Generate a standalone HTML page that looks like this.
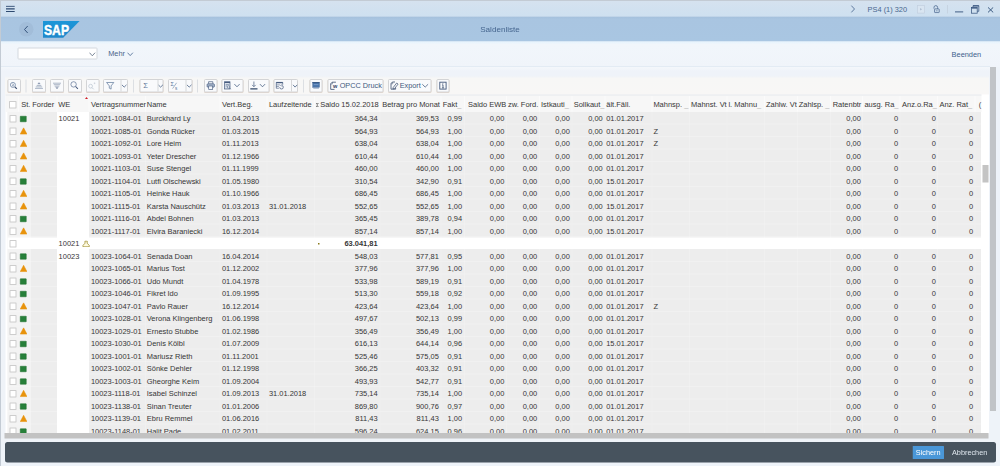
<!DOCTYPE html>
<html lang="de"><head><meta charset="utf-8"><title>Saldenliste</title>
<style>
*{box-sizing:border-box;margin:0;padding:0}
html,body{width:1000px;height:466px;overflow:hidden}
body{position:relative;background:#eef3f9;font-family:"Liberation Sans",Arial,sans-serif;font-size:7.47px;color:#363636;}
.abs{position:absolute}
#edgeL{left:0;top:0;width:1.2px;height:466px;background:#c3cbd4}
#sys{left:0;top:0;width:1000px;height:16.5px;background:linear-gradient(#d5e2ef,#cee0f0);border-top:1px solid #c3cbd4}
#hd{left:0;top:16.5px;width:1000px;height:25px;background:linear-gradient(#a4c0dc 0,#a9c5e1 3px,#a9c6e2 100%)}
#tb{left:1px;top:41.5px;width:999px;height:25.5px;background:linear-gradient(#e6f4fd 0,#f1f6fb 3px,#f0f4fa 100%)}
#tbline{left:1px;top:66px;width:989px;height:1px;background:#e3ebf4}
#content{left:1px;top:67px;width:989px;height:374.5px;background:linear-gradient(#f4f7fb 0,#eff3f9 4px,#eff3f8 100%)}
#alvtb{left:5px;top:76px;width:984px;height:19px;background:linear-gradient(#eff3f8 0,#f7f7f6 2.5px,#f8f7f6 100%)}
.ttl{left:0;width:1000px;top:24px;text-align:center;font-size:8.1px;color:#46668f;line-height:9px}
.bl{color:#3c5f8c}
.btn{position:absolute;top:79.2px;height:13.3px;border:1px solid #d3d4d6;border-radius:1.5px;background:#f9fafc;box-shadow:0 0.6px 0 rgba(214,190,170,.55)}
.btn svg{position:absolute;left:0;top:0}
.btn .dv{position:absolute;top:0;bottom:0;width:1px;background:#d6d7d9}
.sep{position:absolute;top:79.5px;height:13px;width:1px;background:#dcdfe3}
.btxt{position:absolute;top:0;line-height:11.6px;font-size:7.3px;color:#43597c;white-space:nowrap}
/* table */
#tbl{left:5.5px;top:94.5px;width:983.5px;height:339px;background:#fff;overflow:hidden}
#thead{position:absolute;left:0;top:0;width:975.5px;height:17.5px;background:#f7f7f7;border-top:1px solid #e9ecef}
.h{position:absolute;top:100.2px;line-height:9px;white-space:nowrap;color:#363636;font-size:7.47px}
.u{color:#b5b5b5}
.hvl{position:absolute;top:96px;height:15.5px;width:1px;background:rgba(255,255,255,.5)}
.row{position:absolute;left:6px;width:975px;height:12.5px;border-bottom:1px solid rgba(255,255,255,.22)}
.row.sub{border-bottom:none}
.subbg{position:absolute;left:1.5px;top:.7px;width:973.5px;height:11.5px;background:#fff}
.row .c{position:absolute;top:-0.1px;line-height:12.9px;white-space:nowrap;margin-left:-6px}
.row .c.r{margin-left:0;margin-right:-19px}
.cb{position:absolute;left:3.3px;top:3.2px;width:7.4px;height:7.4px;background:#fff;border:1px solid #cdcdcd;border-radius:.4px}
.sg{position:absolute;left:14.2px;top:4.2px;width:6.4px;height:6px;background:#27803a;border:0.7px solid #1f6e2d;border-radius:.5px}
.tri{position:absolute;left:13.9px;top:3.2px;width:7.2px;height:7.2px}
.lite{position:absolute;left:7.5px;top:112px;width:23.5px;height:321px;background:rgba(255,255,255,.35)}
.wecol{position:absolute;left:57px;top:112px;width:32px;height:321px;background:#fff}
.vl{position:absolute;top:112px;height:321px;width:1px;background:rgba(255,255,255,.2)}
.sumic{position:absolute;left:76px;top:3.4px;width:8.2px;height:6.8px}
.dot{position:absolute;left:312px;top:6.2px;width:1.4px;height:1.4px;background:#8a7a1a}
#vsb{left:982px;top:95px;width:7px;height:338px;background:#fff}
#vsbt{left:982.3px;top:165px;width:6.2px;height:17.5px;background:#c4c4c4}
#hsb{left:4.5px;top:433px;width:984px;height:5.7px;background:#c2c2c2}
#psb{left:989.8px;top:67px;width:6.2px;height:344px;background:#c1c4c7}
#foot{left:5px;top:442px;width:991px;height:20.5px;background:#47535e;border-radius:2.5px}
#save{left:912.3px;top:445.8px;width:31.7px;height:13.2px;background:#4a97d8;color:#fff;text-align:center;line-height:13px;font-size:7.3px;border-radius:.5px}
#canc{left:952px;top:445.8px;line-height:13px;font-size:7.3px;color:#dfe6ee}
#sc{position:absolute;left:0;top:0;width:2000px;height:932px;transform:scale(.5);transform-origin:0 0}
#zm{position:absolute;left:0;top:0;width:1000px;height:466px;zoom:2}
</style></head><body>
<div id="sc"><div id="zm">
<div id="sys" class="abs"></div>
<div id="hd" class="abs"></div>
<div id="tb" class="abs"></div>
<div id="content" class="abs"></div>
<div id="tbline" class="abs"></div>
<div id="alvtb" class="abs"></div>
<div id="edgeL" class="abs"></div>

<!-- system bar -->
<svg class="abs" style="left:6px;top:5.6px" width="9" height="7" viewBox="0 0 9 7"><path d="M0 .7h8.7M0 3.4h8.7M0 6.0h8.7" stroke="#2e4a70" stroke-width="1.1" fill="none"/></svg>
<svg class="abs" style="left:850.5px;top:5.2px" width="5" height="8" viewBox="0 0 5 8"><path d="M.8.6L4 4 .8 7.4" stroke="#4a6890" stroke-width=".85" fill="none"/></svg>
<div class="abs bl" style="left:867.6px;top:4.4px;line-height:9px;font-size:7.4px;color:#48668e">PS4 (1) 320</div>
<svg class="abs" style="left:917px;top:4.8px" width="8" height="9" viewBox="0 0 8 9"><rect x=".5" y=".5" width="7" height="7.6" fill="#d9e5f1" stroke="#c2cfde" stroke-width=".7"/><path d="M3.2 3.1L5 4.3 3.2 5.5z" fill="#a9b9cd"/></svg>
<svg class="abs" style="left:932.6px;top:4.4px" width="8" height="9" viewBox="0 0 8 9"><path d="M1.5 4.2V2.9a1.8 1.8 0 0 1 3.6 0V4.4" stroke="#48648c" stroke-width=".75" fill="none"/><rect x="2.1" y="4.4" width="4.6" height="3.7" rx=".5" fill="none" stroke="#48648c" stroke-width=".75"/><path d="M4.4 5.6v1.3" stroke="#48648c" stroke-width=".7"/></svg>
<div class="abs" style="left:947.2px;top:5px;width:1px;height:8.5px;background:#c6d3e1"></div>
<svg class="abs" style="left:955px;top:11px" width="9" height="2" viewBox="0 0 9 2"><path d="M0 .9h8.2" stroke="#3a5780" stroke-width=".95"/></svg>
<svg class="abs" style="left:970.8px;top:4.8px" width="9" height="9" viewBox="0 0 9 9"><path d="M2 2.2V.7h5.8v5.6H6.2" stroke="#3a5780" stroke-width=".75" fill="none"/><path d="M2 .9h5.8" stroke="#3a5780" stroke-width="1.1"/><rect x=".5" y="2.6" width="5.7" height="5.6" fill="none" stroke="#3a5780" stroke-width=".75"/><path d="M.5 3h5.7" stroke="#3a5780" stroke-width="1.2"/></svg>
<svg class="abs" style="left:987.6px;top:6.8px" width="7" height="6" viewBox="0 0 7 6"><path d="M.5.4l5.2 5M5.7.4L.5 5.4" stroke="#35547c" stroke-width=".95" fill="none"/></svg>

<!-- header -->
<div class="abs" style="left:19px;top:22px;width:14.6px;height:14.6px;border-radius:50%;background:#a2bdd9"></div>
<svg class="abs" style="left:23.6px;top:25.4px" width="5" height="8" viewBox="0 0 5 8"><path d="M4.2.5L1 4l3.2 3.5" stroke="#2f4f78" stroke-width=".95" fill="none"/></svg>
<svg class="abs" style="left:43px;top:21px" width="37" height="17" viewBox="0 0 37 17"><defs><linearGradient id="sg" x1="0" y1="0" x2="0" y2="1"><stop offset="0" stop-color="#1b96d8"/><stop offset="1" stop-color="#2088cb"/></linearGradient></defs><path d="M0 0H36.6L20.2 16.7H0z" fill="url(#sg)"/><text x="1" y="13.9" font-family="Liberation Sans, Arial, sans-serif" font-weight="bold" font-size="15" fill="#fff" stroke="#fff" stroke-width=".45" textLength="25" lengthAdjust="spacingAndGlyphs">SAP</text></svg>
<div class="abs ttl">Saldenliste</div>

<!-- command row -->
<div class="abs" style="left:17.3px;top:47.4px;width:80.3px;height:12.3px;background:#fff;border:1px solid #d3d8de;border-radius:1.2px"></div>
<svg class="abs" style="left:89.2px;top:52.1px" width="7" height="5" viewBox="0 0 7 5"><path d="M.5.7L3.3 3.8 6.1.7" stroke="#5a6b80" stroke-width=".8" fill="none"/></svg>
<div class="abs bl" style="left:108.2px;top:49.2px;line-height:9px;font-size:7.4px;color:#4a6488">Mehr</div>
<svg class="abs" style="left:127.2px;top:51.9px" width="7" height="5" viewBox="0 0 7 5"><path d="M.5.7L3.2 3.6 5.9.7" stroke="#44648f" stroke-width=".8" fill="none"/></svg>
<div class="abs bl" style="left:951.6px;top:50px;line-height:9px;font-size:7.4px;color:#3c5f8c">Beenden</div>

<!-- ALV toolbar -->
<div class="btn" style="left:7.5px;width:13.50px"><svg style="left:-1px;top:-1px" width="13.50" height="13.3" viewBox="0 0 13.50 13.3" fill="none" stroke="#5b7599" stroke-width="0.70"><circle cx="5.4" cy="5.9" r="2.5" stroke-width=".7"/><path d="M7.4 7.8L9.3 9.8" stroke="#3d4f6e" stroke-width="1.2"/><path d="M4.5 5.3q1-.8 1.6 0t-1.5 1.5h1.9" stroke-width="0.45"/></svg></div>
<i class="sep" style="left:25.7px"></i>
<div class="btn" style="left:32px;width:14.00px"><svg style="left:-1px;top:-1px" width="14.00" height="13.3" viewBox="0 0 14.00 13.3" fill="none" stroke="#5b7599" stroke-width="0.70"><g stroke="#7d8da7"><path d="M7 3.5L8.2 5H5.8z" fill="#7d8da7" stroke-width="0.3"/><path d="M4.7 6.4h4.6M3.8 7.9h6.4M3 9.4h8" stroke-width="0.62"/></g></svg></div>
<div class="btn" style="left:50px;width:14.00px"><svg style="left:-1px;top:-1px" width="14.00" height="13.3" viewBox="0 0 14.00 13.3" fill="none" stroke="#5b7599" stroke-width="0.70"><g stroke="#7d8da7"><path d="M3 4.2h8M3.8 5.7h6.4M4.7 7.2h4.6" stroke-width="0.62"/><path d="M7 9.9L8.3 8.4H5.7z" fill="#7d8da7" stroke-width="0.3"/></g></svg></div>
<div class="btn" style="left:68px;width:14.00px"><svg style="left:-1px;top:-1px" width="14.00" height="13.3" viewBox="0 0 14.00 13.3" fill="none" stroke="#5b7599" stroke-width="0.70"><circle cx="5.6" cy="5.4" r="2.7" stroke="#5a7092" stroke-width=".7"/><path d="M7.6 7.5L9.9 9.9" stroke="#43567a" stroke-width="1.05"/></svg></div>
<div class="btn dis" style="left:86px;width:13.50px"><svg style="left:-1px;top:-1px" width="13.50" height="13.3" viewBox="0 0 13.50 13.3" fill="none" stroke="#5b7599" stroke-width="0.70"><g stroke="#b7c1ce"><circle cx="4.6" cy="7.2" r="1.9" stroke-width="0.65"/><path d="M6 8.6L7.7 10.3" stroke-width="0.8"/><path d="M7.7 4.3h1.7M8.55 3.45v1.7" stroke-width="0.45"/></g></svg></div>
<div class="btn" style="left:103px;width:24.75px"><svg style="left:-1px;top:-1px" width="24.75" height="13.3" viewBox="0 0 24.75 13.3" fill="none" stroke="#5b7599" stroke-width="0.70"><path d="M3.6 3.5h7.2L8.1 6.9v3.2L6.3 9.2V6.9z" stroke-linejoin="round"/><path d="M18.90 5.85L21.20 8.10L23.50 5.85" stroke="#40587e" stroke-width="0.76"/></svg><i class="dv" style="left:16.60px"></i></div>
<i class="sep" style="left:133.0px"></i>
<div class="btn" style="left:139.4px;width:24.10px"><svg style="left:-1px;top:-1px" width="24.10" height="13.3" viewBox="0 0 24.10 13.3" fill="none" stroke="#5b7599" stroke-width="0.70"><text x="3.8" y="9.2" font-family="Liberation Sans, Arial, sans-serif" font-size="7.6" fill="#5b7599" stroke="none">Σ</text><path d="M18.80 5.85L21.10 8.10L23.40 5.85" stroke="#40587e" stroke-width="0.76"/></svg><i class="dv" style="left:17.10px"></i></div>
<div class="btn" style="left:168px;width:24.25px"><svg style="left:-1px;top:-1px" width="24.25" height="13.3" viewBox="0 0 24.25 13.3" fill="none" stroke="#5b7599" stroke-width="0.70"><text x="2.6" y="7" font-family="Liberation Sans, Arial, sans-serif" font-size="5.4" fill="#5b7599" stroke="none">Σ</text><path d="M4.6 9.6L8.6 3.8" stroke-width="0.55"/><text x="7.1" y="10.6" font-family="Liberation Sans, Arial, sans-serif" font-size="4.6" fill="#5b7599" stroke="none">s</text><path d="M18.90 5.85L21.20 8.10L23.50 5.85" stroke="#40587e" stroke-width="0.76"/></svg><i class="dv" style="left:16.60px"></i></div>
<i class="sep" style="left:197.0px"></i>
<div class="btn" style="left:204px;width:13.25px"><svg style="left:-1px;top:-1px" width="13.25" height="13.3" viewBox="0 0 13.25 13.3" fill="none" stroke="#5b7599" stroke-width="0.70"><path d="M4.6 4.8V2.7h4.2V4.8" stroke="#485d80" stroke-width="0.7"/><rect x="3.1" y="4.8" width="7.3" height="3.4" rx=".9" fill="#a9b8cd" stroke="#485d80" stroke-width="0.7"/><rect x="4.7" y="7" width="4" height="3.4" fill="#f4f7fb" stroke="#485d80" stroke-width="0.65"/></svg></div>
<div class="btn" style="left:221.5px;width:22.00px"><svg style="left:-1px;top:-1px" width="22.00" height="13.3" viewBox="0 0 22.00 13.3" fill="none" stroke="#5b7599" stroke-width="0.70"><rect x="3.1" y="2.8" width="5.4" height="7.2" fill="#d7dfea" stroke="#485d80" stroke-width="0.7"/><path d="M3.1 3.4h5.4" stroke="#485d80" stroke-width="1.1"/><path d="M4.2 5.6h3.2M4.2 7h1.6" stroke="#485d80" stroke-width="0.5"/><circle cx="7" cy="8" r="1.2" fill="#f4f7fb" stroke="#485d80" stroke-width=".55"/><path d="M7.9 8.9l1.3 1.3" stroke="#485d80" stroke-width="0.7"/><path d="M12.90 5.10L15.50 7.80L18.10 5.10" stroke="#40587e" stroke-width="0.76"/></svg></div>
<div class="btn" style="left:248px;width:21.40px"><svg style="left:-1px;top:-1px" width="21.40" height="13.3" viewBox="0 0 21.40 13.3" fill="none" stroke="#5b7599" stroke-width="0.70"><path d="M5.9 2.5v5M4.1 5.9l1.8 1.8 1.8-1.8" stroke="#485d80" stroke-width="0.7"/><path d="M2.3 9.9h7.2" stroke="#334868" stroke-width="1.1"/><path d="M11.90 5.10L14.50 7.80L17.10 5.10" stroke="#40587e" stroke-width="0.76"/></svg></div>
<div class="btn" style="left:273.4px;width:24.50px"><svg style="left:-1px;top:-1px" width="24.50" height="13.3" viewBox="0 0 24.50 13.3" fill="none" stroke="#5b7599" stroke-width="0.70"><path d="M2.8 9.3V3.4h6.4v2.4" stroke="#485d80" stroke-width="0.7"/><path d="M2.8 3.7h6.4" stroke="#485d80" stroke-width="1.2"/><path d="M2.8 5.9h3.6M2.8 7.6h2.6M2.8 9.3h2.6" stroke="#485d80" stroke-width="0.6"/><path d="M6.2 8.2a1.8 1.8 0 1 0 1.8-1.8" stroke="#485d80" stroke-width="0.75"/><path d="M8 5.4l-1 1 1 1" stroke="#485d80" stroke-width="0.55"/><path d="M19.50 5.85L21.60 8.10L23.70 5.85" stroke="#40587e" stroke-width="0.76"/></svg><i class="dv" style="left:16.85px"></i></div>
<i class="sep" style="left:303.0px"></i>
<div class="btn" style="left:309.6px;width:13.15px"><svg style="left:-1px;top:-1px" width="13.15" height="13.3" viewBox="0 0 13.15 13.3" fill="none" stroke="#5b7599" stroke-width="0.70"><rect x="3.2" y="3.2" width="6.8" height="5.2" fill="#4a74aa" stroke="#3d5f90" stroke-width="0.4"/><path d="M3.2 3.6h6.8" stroke="#34527e" stroke-width="0.9"/><path d="M4.2 5.6h4.8" stroke="#8fb0d8" stroke-width="0.6"/><path d="M3.8 9.3h5.6" stroke="#7f98ba" stroke-width="0.7"/></svg></div>
<div class="btn" style="left:327.25px;width:56.25px"><svg style="left:-1px;top:-1px" width="14" height="13.3" viewBox="0 0 14 13.3" fill="none" stroke="#5b7599" stroke-width="0.62"><path d="M8.4 3.2H4.6L3.2 4.8V10.4H7" stroke="#3b4f70" stroke-width=".8"/><path d="M4.9 3.2v1.8H3.2" stroke="#3b4f70" stroke-width="0.5"/><text x="5.5" y="9.2" font-family="Liberation Sans, Arial, sans-serif" font-weight="bold" font-size="5.6" fill="#34486a" stroke="none">w</text></svg><span class="btxt" style="left:11.4px">OPCC Druck</span></div>
<div class="btn" style="left:388px;width:43.5px"><svg style="left:-1px;top:-1px" width="43.5" height="13.3" viewBox="0 0 43.5 13.3" fill="none" stroke="#3b4f70" stroke-width="0.8"><path d="M7 3H4.4L3 4.6V10.2H7.6V8.6"/><path d="M4.7 3v1.8H3" stroke-width="0.5"/><path d="M5.2 8.5L8.7 4l1.4 1.1L6.6 9.5l-1.7.5z" stroke-width="0.7"/><path d="M34.30 5.25L37.20 8.10L40.10 5.25" stroke="#40587e" stroke-width="0.76"/></svg><span class="btxt" style="left:10.7px">Export</span></div>
<div class="btn" style="left:436.5px;width:12.90px"><svg style="left:-1px;top:-1px" width="12.90" height="13.3" viewBox="0 0 12.90 13.3" fill="none" stroke="#5b7599" stroke-width="0.70"><rect x="3.3" y="3.2" width="6.3" height="6.9" stroke="#43577a" stroke-width="0.9"/><path d="M6.5 5.9v2.8M5.5 8.9h2.1M5.7 5.9h.8" stroke="#3b4f70" stroke-width="0.8"/><circle cx="6.4" cy="4.7" r=".5" fill="#3b4f70" stroke="none"/></svg></div>

<!-- table -->
<div id="tbl" class="abs"></div>
<div class="abs" style="left:5.5px;top:94.5px;width:976px;height:17.5px;background:#f7f7f7;border-top:1px solid #e6e9ed"></div>
<i class="cb" style="left:9.2px;top:101.2px"></i>
<i class="hvl" style="left:18.0px"></i><i class="hvl" style="left:30.5px"></i><i class="hvl" style="left:56.5px"></i><i class="hvl" style="left:88.5px"></i><i class="hvl" style="left:145.0px"></i><i class="hvl" style="left:219.5px"></i><i class="hvl" style="left:266.5px"></i><i class="hvl" style="left:313.9px"></i><i class="hvl" style="left:379.5px"></i><i class="hvl" style="left:440.5px"></i><i class="hvl" style="left:463.9px"></i><i class="hvl" style="left:505.75px"></i><i class="hvl" style="left:538.9px"></i><i class="hvl" style="left:571.5px"></i><i class="hvl" style="left:604.5px"></i><i class="hvl" style="left:651.5px"></i><i class="hvl" style="left:688.9px"></i><i class="hvl" style="left:726.5px"></i><i class="hvl" style="left:763.9px"></i><i class="hvl" style="left:796.75px"></i><i class="hvl" style="left:830.1px"></i><i class="hvl" style="left:862.0px"></i><i class="hvl" style="left:899.5px"></i><i class="hvl" style="left:937.0px"></i><i class="hvl" style="left:974.5px"></i>
<span class="h" style="left:21.2px">St.</span><span class="h" style="left:32.2px">Forder</span><span class="h" style="left:58.3px">WE</span><span class="h" style="left:90.9px">Vertragsnummer</span><span class="h" style="left:146.8px">Name</span><span class="h" style="left:221.9px">Vert.Beg.</span><span class="h" style="left:268.9px">Laufzeitende</span><span class="h" style="left:320.2px">Saldo 15.02.2018</span><span class="h" style="left:382.2px">Betrag pro Monat</span><span class="h" style="left:442.7px">Fakt<span class="u">_</span></span><span class="h" style="left:468px">Saldo EWB</span><span class="h" style="left:508px">zw. Ford.</span><span class="h" style="left:541px">Istkauti<span class="u">_</span></span><span class="h" style="left:573.7px">Sollkaut<span class="u">_</span></span><span class="h" style="left:606.3px">ält.Fäll.</span><span class="h" style="left:653.4px">Mahnsp. <span class="u">_</span></span><span class="h" style="left:691px">Mahnst. Vt</span><span class="h" style="left:728.4px">l. Mahnu<span class="u">_</span></span><span class="h" style="left:766px">Zahlw. Vt</span><span class="h" style="left:798.7px">Zahlsp. <span class="u">_</span></span><span class="h" style="left:832.7px">Ratenbtr</span><span class="h" style="left:864.4px">ausg. Ra<span class="u">_</span></span><span class="h" style="left:902px">Anz.o.Ra<span class="u">_</span></span><span class="h" style="left:939.4px">Anz. Rat<span class="u">_</span></span><span class="h" style="left:978.8px">(</span>
<svg class="abs" style="left:85.2px;top:97.2px" width="3" height="2" viewBox="0 0 3 2"><path d="M1.5 0L3 2H0z" fill="#d0202a"/></svg>
<svg class="abs" style="left:315.8px;top:103.2px" width="3" height="4" viewBox="0 0 3 4"><path d="M2.7.3H.4L1.6 2 .4 3.7H2.7" stroke="#333" stroke-width=".6" fill="none"/></svg>
<div class="abs" style="left:7.5px;top:112px;width:973.5px;height:321px;background:#ededed"></div>
<i class="lite"></i>
<i class="wecol"></i>
<i class="vl" style="left:88.5px"></i><i class="vl" style="left:145.0px"></i><i class="vl" style="left:219.5px"></i><i class="vl" style="left:266.5px"></i><i class="vl" style="left:313.9px"></i><i class="vl" style="left:379.5px"></i><i class="vl" style="left:440.5px"></i><i class="vl" style="left:463.9px"></i><i class="vl" style="left:505.75px"></i><i class="vl" style="left:538.9px"></i><i class="vl" style="left:571.5px"></i><i class="vl" style="left:604.5px"></i><i class="vl" style="left:651.5px"></i><i class="vl" style="left:688.9px"></i><i class="vl" style="left:726.5px"></i><i class="vl" style="left:763.9px"></i><i class="vl" style="left:796.75px"></i><i class="vl" style="left:830.1px"></i><i class="vl" style="left:862.0px"></i><i class="vl" style="left:899.5px"></i><i class="vl" style="left:937.0px"></i><i class="vl" style="left:974.5px"></i>
<div class="row" style="top:112.0px"><i class="cb"></i><i class="sg"></i><span class="c" style="left:58.6px">10021</span><span class="c" style="left:90.9px">10021-1084-01</span><span class="c" style="left:146.8px">Burckhard Ly</span><span class="c" style="left:221.9px">01.04.2013</span><span class="c r" style="right:622.4px">364,34</span><span class="c r" style="right:561.2px">369,53</span><span class="c r" style="right:537.9px">0,99</span><span class="c r" style="right:495.7px">0,00</span><span class="c r" style="right:462.8px">0,00</span><span class="c r" style="right:430.1px">0,00</span><span class="c r" style="right:397.3px">0,00</span><span class="c" style="left:606.2px">01.01.2017</span><span class="c r" style="right:139.2px">0,00</span><span class="c r" style="right:101.8px">0</span><span class="c r" style="right:64.2px">0</span><span class="c r" style="right:26.8px">0</span></div>
<div class="row" style="top:124.5px"><i class="cb"></i><svg class="tri" viewBox="0 0 8 8"><path d="M4 0.3L7.7 7.3H0.3z" fill="#e8930c" stroke="#e8930c" stroke-width="0.6" stroke-linejoin="round"/></svg><span class="c" style="left:90.9px">10021-1085-01</span><span class="c" style="left:146.8px">Gonda Rücker</span><span class="c" style="left:221.9px">01.03.2015</span><span class="c r" style="right:622.4px">564,93</span><span class="c r" style="right:561.2px">564,93</span><span class="c r" style="right:537.9px">1,00</span><span class="c r" style="right:495.7px">0,00</span><span class="c r" style="right:462.8px">0,00</span><span class="c r" style="right:430.1px">0,00</span><span class="c r" style="right:397.3px">0,00</span><span class="c" style="left:606.2px">01.01.2017</span><span class="c" style="left:653.4px">Z</span><span class="c r" style="right:139.2px">0,00</span><span class="c r" style="right:101.8px">0</span><span class="c r" style="right:64.2px">0</span><span class="c r" style="right:26.8px">0</span></div>
<div class="row" style="top:137.0px"><i class="cb"></i><svg class="tri" viewBox="0 0 8 8"><path d="M4 0.3L7.7 7.3H0.3z" fill="#e8930c" stroke="#e8930c" stroke-width="0.6" stroke-linejoin="round"/></svg><span class="c" style="left:90.9px">10021-1092-01</span><span class="c" style="left:146.8px">Lore Heim</span><span class="c" style="left:221.9px">01.11.2013</span><span class="c r" style="right:622.4px">638,04</span><span class="c r" style="right:561.2px">638,04</span><span class="c r" style="right:537.9px">1,00</span><span class="c r" style="right:495.7px">0,00</span><span class="c r" style="right:462.8px">0,00</span><span class="c r" style="right:430.1px">0,00</span><span class="c r" style="right:397.3px">0,00</span><span class="c" style="left:606.2px">01.01.2017</span><span class="c" style="left:653.4px">Z</span><span class="c r" style="right:139.2px">0,00</span><span class="c r" style="right:101.8px">0</span><span class="c r" style="right:64.2px">0</span><span class="c r" style="right:26.8px">0</span></div>
<div class="row" style="top:149.5px"><i class="cb"></i><svg class="tri" viewBox="0 0 8 8"><path d="M4 0.3L7.7 7.3H0.3z" fill="#e8930c" stroke="#e8930c" stroke-width="0.6" stroke-linejoin="round"/></svg><span class="c" style="left:90.9px">10021-1093-01</span><span class="c" style="left:146.8px">Yeter Drescher</span><span class="c" style="left:221.9px">01.12.1966</span><span class="c r" style="right:622.4px">610,44</span><span class="c r" style="right:561.2px">610,44</span><span class="c r" style="right:537.9px">1,00</span><span class="c r" style="right:495.7px">0,00</span><span class="c r" style="right:462.8px">0,00</span><span class="c r" style="right:430.1px">0,00</span><span class="c r" style="right:397.3px">0,00</span><span class="c" style="left:606.2px">01.01.2017</span><span class="c r" style="right:139.2px">0,00</span><span class="c r" style="right:101.8px">0</span><span class="c r" style="right:64.2px">0</span><span class="c r" style="right:26.8px">0</span></div>
<div class="row" style="top:162.0px"><i class="cb"></i><svg class="tri" viewBox="0 0 8 8"><path d="M4 0.3L7.7 7.3H0.3z" fill="#e8930c" stroke="#e8930c" stroke-width="0.6" stroke-linejoin="round"/></svg><span class="c" style="left:90.9px">10021-1103-01</span><span class="c" style="left:146.8px">Suse Stengel</span><span class="c" style="left:221.9px">01.11.1999</span><span class="c r" style="right:622.4px">460,00</span><span class="c r" style="right:561.2px">460,00</span><span class="c r" style="right:537.9px">1,00</span><span class="c r" style="right:495.7px">0,00</span><span class="c r" style="right:462.8px">0,00</span><span class="c r" style="right:430.1px">0,00</span><span class="c r" style="right:397.3px">0,00</span><span class="c" style="left:606.2px">01.01.2017</span><span class="c r" style="right:139.2px">0,00</span><span class="c r" style="right:101.8px">0</span><span class="c r" style="right:64.2px">0</span><span class="c r" style="right:26.8px">0</span></div>
<div class="row" style="top:174.5px"><i class="cb"></i><i class="sg"></i><span class="c" style="left:90.9px">10021-1104-01</span><span class="c" style="left:146.8px">Lutfi Olschewski</span><span class="c" style="left:221.9px">01.05.1980</span><span class="c r" style="right:622.4px">310,54</span><span class="c r" style="right:561.2px">342,90</span><span class="c r" style="right:537.9px">0,91</span><span class="c r" style="right:495.7px">0,00</span><span class="c r" style="right:462.8px">0,00</span><span class="c r" style="right:430.1px">0,00</span><span class="c r" style="right:397.3px">0,00</span><span class="c" style="left:606.2px">15.01.2017</span><span class="c r" style="right:139.2px">0,00</span><span class="c r" style="right:101.8px">0</span><span class="c r" style="right:64.2px">0</span><span class="c r" style="right:26.8px">0</span></div>
<div class="row" style="top:187.0px"><i class="cb"></i><svg class="tri" viewBox="0 0 8 8"><path d="M4 0.3L7.7 7.3H0.3z" fill="#e8930c" stroke="#e8930c" stroke-width="0.6" stroke-linejoin="round"/></svg><span class="c" style="left:90.9px">10021-1105-01</span><span class="c" style="left:146.8px">Heinke Hauk</span><span class="c" style="left:221.9px">01.10.1966</span><span class="c r" style="right:622.4px">686,45</span><span class="c r" style="right:561.2px">686,45</span><span class="c r" style="right:537.9px">1,00</span><span class="c r" style="right:495.7px">0,00</span><span class="c r" style="right:462.8px">0,00</span><span class="c r" style="right:430.1px">0,00</span><span class="c r" style="right:397.3px">0,00</span><span class="c" style="left:606.2px">01.01.2017</span><span class="c r" style="right:139.2px">0,00</span><span class="c r" style="right:101.8px">0</span><span class="c r" style="right:64.2px">0</span><span class="c r" style="right:26.8px">0</span></div>
<div class="row" style="top:199.5px"><i class="cb"></i><svg class="tri" viewBox="0 0 8 8"><path d="M4 0.3L7.7 7.3H0.3z" fill="#e8930c" stroke="#e8930c" stroke-width="0.6" stroke-linejoin="round"/></svg><span class="c" style="left:90.9px">10021-1115-01</span><span class="c" style="left:146.8px">Karsta Nauschütz</span><span class="c" style="left:221.9px">01.03.2013</span><span class="c" style="left:268.9px">31.01.2018</span><span class="c r" style="right:622.4px">552,65</span><span class="c r" style="right:561.2px">552,65</span><span class="c r" style="right:537.9px">1,00</span><span class="c r" style="right:495.7px">0,00</span><span class="c r" style="right:462.8px">0,00</span><span class="c r" style="right:430.1px">0,00</span><span class="c r" style="right:397.3px">0,00</span><span class="c" style="left:606.2px">15.01.2017</span><span class="c r" style="right:139.2px">0,00</span><span class="c r" style="right:101.8px">0</span><span class="c r" style="right:64.2px">0</span><span class="c r" style="right:26.8px">0</span></div>
<div class="row" style="top:212.0px"><i class="cb"></i><i class="sg"></i><span class="c" style="left:90.9px">10021-1116-01</span><span class="c" style="left:146.8px">Abdel Bohnen</span><span class="c" style="left:221.9px">01.03.2013</span><span class="c r" style="right:622.4px">365,45</span><span class="c r" style="right:561.2px">389,78</span><span class="c r" style="right:537.9px">0,94</span><span class="c r" style="right:495.7px">0,00</span><span class="c r" style="right:462.8px">0,00</span><span class="c r" style="right:430.1px">0,00</span><span class="c r" style="right:397.3px">0,00</span><span class="c" style="left:606.2px">01.01.2017</span><span class="c r" style="right:139.2px">0,00</span><span class="c r" style="right:101.8px">0</span><span class="c r" style="right:64.2px">0</span><span class="c r" style="right:26.8px">0</span></div>
<div class="row" style="top:224.5px"><i class="cb"></i><svg class="tri" viewBox="0 0 8 8"><path d="M4 0.3L7.7 7.3H0.3z" fill="#e8930c" stroke="#e8930c" stroke-width="0.6" stroke-linejoin="round"/></svg><span class="c" style="left:90.9px">10021-1117-01</span><span class="c" style="left:146.8px">Elvira Baraniecki</span><span class="c" style="left:221.9px">16.12.2014</span><span class="c r" style="right:622.4px">857,14</span><span class="c r" style="right:561.2px">857,14</span><span class="c r" style="right:537.9px">1,00</span><span class="c r" style="right:495.7px">0,00</span><span class="c r" style="right:462.8px">0,00</span><span class="c r" style="right:430.1px">0,00</span><span class="c r" style="right:397.3px">0,00</span><span class="c" style="left:606.2px">15.01.2017</span><span class="c r" style="right:139.2px">0,00</span><span class="c r" style="right:101.8px">0</span><span class="c r" style="right:64.2px">0</span><span class="c r" style="right:26.8px">0</span></div>
<div class="row sub" style="top:237.0px"><i class="subbg"></i><i class="cb"></i><span class="c" style="left:58.6px">10021</span><svg class="sumic" viewBox="0 0 9 8"><path d="M3.2 0.6h2.6v2.6l2.4 2.6v1.6h-7.4v-1.6l2.4-2.6z" fill="#fffbe0" stroke="#9a8a2a" stroke-width="0.9"/></svg><span class="dot"></span><span class="c r" style="right:622.4px;font-weight:bold">63.041,81</span></div>
<div class="row" style="top:249.5px"><i class="cb"></i><i class="sg"></i><span class="c" style="left:58.6px">10023</span><span class="c" style="left:90.9px">10023-1064-01</span><span class="c" style="left:146.8px">Senada Doan</span><span class="c" style="left:221.9px">16.04.2014</span><span class="c r" style="right:622.4px">548,03</span><span class="c r" style="right:561.2px">577,81</span><span class="c r" style="right:537.9px">0,95</span><span class="c r" style="right:495.7px">0,00</span><span class="c r" style="right:462.8px">0,00</span><span class="c r" style="right:430.1px">0,00</span><span class="c r" style="right:397.3px">0,00</span><span class="c" style="left:606.2px">01.01.2017</span><span class="c r" style="right:139.2px">0,00</span><span class="c r" style="right:101.8px">0</span><span class="c r" style="right:64.2px">0</span><span class="c r" style="right:26.8px">0</span></div>
<div class="row" style="top:262.0px"><i class="cb"></i><svg class="tri" viewBox="0 0 8 8"><path d="M4 0.3L7.7 7.3H0.3z" fill="#e8930c" stroke="#e8930c" stroke-width="0.6" stroke-linejoin="round"/></svg><span class="c" style="left:90.9px">10023-1065-01</span><span class="c" style="left:146.8px">Marius Tost</span><span class="c" style="left:221.9px">01.12.2002</span><span class="c r" style="right:622.4px">377,96</span><span class="c r" style="right:561.2px">377,96</span><span class="c r" style="right:537.9px">1,00</span><span class="c r" style="right:495.7px">0,00</span><span class="c r" style="right:462.8px">0,00</span><span class="c r" style="right:430.1px">0,00</span><span class="c r" style="right:397.3px">0,00</span><span class="c" style="left:606.2px">01.01.2017</span><span class="c r" style="right:139.2px">0,00</span><span class="c r" style="right:101.8px">0</span><span class="c r" style="right:64.2px">0</span><span class="c r" style="right:26.8px">0</span></div>
<div class="row" style="top:274.5px"><i class="cb"></i><i class="sg"></i><span class="c" style="left:90.9px">10023-1066-01</span><span class="c" style="left:146.8px">Udo Mundt</span><span class="c" style="left:221.9px">01.04.1978</span><span class="c r" style="right:622.4px">533,98</span><span class="c r" style="right:561.2px">589,19</span><span class="c r" style="right:537.9px">0,91</span><span class="c r" style="right:495.7px">0,00</span><span class="c r" style="right:462.8px">0,00</span><span class="c r" style="right:430.1px">0,00</span><span class="c r" style="right:397.3px">0,00</span><span class="c" style="left:606.2px">01.01.2017</span><span class="c r" style="right:139.2px">0,00</span><span class="c r" style="right:101.8px">0</span><span class="c r" style="right:64.2px">0</span><span class="c r" style="right:26.8px">0</span></div>
<div class="row" style="top:287.0px"><i class="cb"></i><i class="sg"></i><span class="c" style="left:90.9px">10023-1046-01</span><span class="c" style="left:146.8px">Fikret Ido</span><span class="c" style="left:221.9px">01.09.1995</span><span class="c r" style="right:622.4px">513,30</span><span class="c r" style="right:561.2px">559,18</span><span class="c r" style="right:537.9px">0,92</span><span class="c r" style="right:495.7px">0,00</span><span class="c r" style="right:462.8px">0,00</span><span class="c r" style="right:430.1px">0,00</span><span class="c r" style="right:397.3px">0,00</span><span class="c" style="left:606.2px">01.01.2017</span><span class="c r" style="right:139.2px">0,00</span><span class="c r" style="right:101.8px">0</span><span class="c r" style="right:64.2px">0</span><span class="c r" style="right:26.8px">0</span></div>
<div class="row" style="top:299.5px"><i class="cb"></i><svg class="tri" viewBox="0 0 8 8"><path d="M4 0.3L7.7 7.3H0.3z" fill="#e8930c" stroke="#e8930c" stroke-width="0.6" stroke-linejoin="round"/></svg><span class="c" style="left:90.9px">10023-1047-01</span><span class="c" style="left:146.8px">Pavlo Rauer</span><span class="c" style="left:221.9px">16.12.2014</span><span class="c r" style="right:622.4px">423,64</span><span class="c r" style="right:561.2px">423,64</span><span class="c r" style="right:537.9px">1,00</span><span class="c r" style="right:495.7px">0,00</span><span class="c r" style="right:462.8px">0,00</span><span class="c r" style="right:430.1px">0,00</span><span class="c r" style="right:397.3px">0,00</span><span class="c" style="left:606.2px">01.01.2017</span><span class="c" style="left:653.4px">Z</span><span class="c r" style="right:139.2px">0,00</span><span class="c r" style="right:101.8px">0</span><span class="c r" style="right:64.2px">0</span><span class="c r" style="right:26.8px">0</span></div>
<div class="row" style="top:312.0px"><i class="cb"></i><i class="sg"></i><span class="c" style="left:90.9px">10023-1028-01</span><span class="c" style="left:146.8px">Verona Klingenberg</span><span class="c" style="left:221.9px">01.06.1998</span><span class="c r" style="right:622.4px">497,67</span><span class="c r" style="right:561.2px">502,13</span><span class="c r" style="right:537.9px">0,99</span><span class="c r" style="right:495.7px">0,00</span><span class="c r" style="right:462.8px">0,00</span><span class="c r" style="right:430.1px">0,00</span><span class="c r" style="right:397.3px">0,00</span><span class="c" style="left:606.2px">01.01.2017</span><span class="c r" style="right:139.2px">0,00</span><span class="c r" style="right:101.8px">0</span><span class="c r" style="right:64.2px">0</span><span class="c r" style="right:26.8px">0</span></div>
<div class="row" style="top:324.5px"><i class="cb"></i><svg class="tri" viewBox="0 0 8 8"><path d="M4 0.3L7.7 7.3H0.3z" fill="#e8930c" stroke="#e8930c" stroke-width="0.6" stroke-linejoin="round"/></svg><span class="c" style="left:90.9px">10023-1029-01</span><span class="c" style="left:146.8px">Ernesto Stubbe</span><span class="c" style="left:221.9px">01.02.1986</span><span class="c r" style="right:622.4px">356,49</span><span class="c r" style="right:561.2px">356,49</span><span class="c r" style="right:537.9px">1,00</span><span class="c r" style="right:495.7px">0,00</span><span class="c r" style="right:462.8px">0,00</span><span class="c r" style="right:430.1px">0,00</span><span class="c r" style="right:397.3px">0,00</span><span class="c" style="left:606.2px">01.01.2017</span><span class="c r" style="right:139.2px">0,00</span><span class="c r" style="right:101.8px">0</span><span class="c r" style="right:64.2px">0</span><span class="c r" style="right:26.8px">0</span></div>
<div class="row" style="top:337.0px"><i class="cb"></i><i class="sg"></i><span class="c" style="left:90.9px">10023-1030-01</span><span class="c" style="left:146.8px">Denis Kölbl</span><span class="c" style="left:221.9px">01.07.2009</span><span class="c r" style="right:622.4px">616,13</span><span class="c r" style="right:561.2px">644,14</span><span class="c r" style="right:537.9px">0,96</span><span class="c r" style="right:495.7px">0,00</span><span class="c r" style="right:462.8px">0,00</span><span class="c r" style="right:430.1px">0,00</span><span class="c r" style="right:397.3px">0,00</span><span class="c" style="left:606.2px">15.01.2017</span><span class="c r" style="right:139.2px">0,00</span><span class="c r" style="right:101.8px">0</span><span class="c r" style="right:64.2px">0</span><span class="c r" style="right:26.8px">0</span></div>
<div class="row" style="top:349.5px"><i class="cb"></i><i class="sg"></i><span class="c" style="left:90.9px">10023-1001-01</span><span class="c" style="left:146.8px">Mariusz Rieth</span><span class="c" style="left:221.9px">01.11.2001</span><span class="c r" style="right:622.4px">525,46</span><span class="c r" style="right:561.2px">575,05</span><span class="c r" style="right:537.9px">0,91</span><span class="c r" style="right:495.7px">0,00</span><span class="c r" style="right:462.8px">0,00</span><span class="c r" style="right:430.1px">0,00</span><span class="c r" style="right:397.3px">0,00</span><span class="c" style="left:606.2px">01.01.2017</span><span class="c r" style="right:139.2px">0,00</span><span class="c r" style="right:101.8px">0</span><span class="c r" style="right:64.2px">0</span><span class="c r" style="right:26.8px">0</span></div>
<div class="row" style="top:362.0px"><i class="cb"></i><i class="sg"></i><span class="c" style="left:90.9px">10023-1002-01</span><span class="c" style="left:146.8px">Sönke Dehler</span><span class="c" style="left:221.9px">01.12.1998</span><span class="c r" style="right:622.4px">366,25</span><span class="c r" style="right:561.2px">403,32</span><span class="c r" style="right:537.9px">0,91</span><span class="c r" style="right:495.7px">0,00</span><span class="c r" style="right:462.8px">0,00</span><span class="c r" style="right:430.1px">0,00</span><span class="c r" style="right:397.3px">0,00</span><span class="c" style="left:606.2px">01.01.2017</span><span class="c r" style="right:139.2px">0,00</span><span class="c r" style="right:101.8px">0</span><span class="c r" style="right:64.2px">0</span><span class="c r" style="right:26.8px">0</span></div>
<div class="row" style="top:374.5px"><i class="cb"></i><i class="sg"></i><span class="c" style="left:90.9px">10023-1003-01</span><span class="c" style="left:146.8px">Gheorghe Keim</span><span class="c" style="left:221.9px">01.09.2004</span><span class="c r" style="right:622.4px">493,93</span><span class="c r" style="right:561.2px">542,77</span><span class="c r" style="right:537.9px">0,91</span><span class="c r" style="right:495.7px">0,00</span><span class="c r" style="right:462.8px">0,00</span><span class="c r" style="right:430.1px">0,00</span><span class="c r" style="right:397.3px">0,00</span><span class="c" style="left:606.2px">01.01.2017</span><span class="c r" style="right:139.2px">0,00</span><span class="c r" style="right:101.8px">0</span><span class="c r" style="right:64.2px">0</span><span class="c r" style="right:26.8px">0</span></div>
<div class="row" style="top:387.0px"><i class="cb"></i><svg class="tri" viewBox="0 0 8 8"><path d="M4 0.3L7.7 7.3H0.3z" fill="#e8930c" stroke="#e8930c" stroke-width="0.6" stroke-linejoin="round"/></svg><span class="c" style="left:90.9px">10023-1118-01</span><span class="c" style="left:146.8px">Isabel Schinzel</span><span class="c" style="left:221.9px">01.09.2013</span><span class="c" style="left:268.9px">31.01.2018</span><span class="c r" style="right:622.4px">735,14</span><span class="c r" style="right:561.2px">735,14</span><span class="c r" style="right:537.9px">1,00</span><span class="c r" style="right:495.7px">0,00</span><span class="c r" style="right:462.8px">0,00</span><span class="c r" style="right:430.1px">0,00</span><span class="c r" style="right:397.3px">0,00</span><span class="c" style="left:606.2px">01.01.2017</span><span class="c r" style="right:139.2px">0,00</span><span class="c r" style="right:101.8px">0</span><span class="c r" style="right:64.2px">0</span><span class="c r" style="right:26.8px">0</span></div>
<div class="row" style="top:399.5px"><i class="cb"></i><i class="sg"></i><span class="c" style="left:90.9px">10023-1138-01</span><span class="c" style="left:146.8px">Sinan Treuter</span><span class="c" style="left:221.9px">01.01.2006</span><span class="c r" style="right:622.4px">869,80</span><span class="c r" style="right:561.2px">900,76</span><span class="c r" style="right:537.9px">0,97</span><span class="c r" style="right:495.7px">0,00</span><span class="c r" style="right:462.8px">0,00</span><span class="c r" style="right:430.1px">0,00</span><span class="c r" style="right:397.3px">0,00</span><span class="c" style="left:606.2px">01.01.2017</span><span class="c r" style="right:139.2px">0,00</span><span class="c r" style="right:101.8px">0</span><span class="c r" style="right:64.2px">0</span><span class="c r" style="right:26.8px">0</span></div>
<div class="row" style="top:412.0px"><i class="cb"></i><svg class="tri" viewBox="0 0 8 8"><path d="M4 0.3L7.7 7.3H0.3z" fill="#e8930c" stroke="#e8930c" stroke-width="0.6" stroke-linejoin="round"/></svg><span class="c" style="left:90.9px">10023-1139-01</span><span class="c" style="left:146.8px">Ebru Remmel</span><span class="c" style="left:221.9px">01.06.2016</span><span class="c r" style="right:622.4px">811,43</span><span class="c r" style="right:561.2px">811,43</span><span class="c r" style="right:537.9px">1,00</span><span class="c r" style="right:495.7px">0,00</span><span class="c r" style="right:462.8px">0,00</span><span class="c r" style="right:430.1px">0,00</span><span class="c r" style="right:397.3px">0,00</span><span class="c" style="left:606.2px">01.01.2017</span><span class="c r" style="right:139.2px">0,00</span><span class="c r" style="right:101.8px">0</span><span class="c r" style="right:64.2px">0</span><span class="c r" style="right:26.8px">0</span></div>
<div class="row" style="top:424.5px"><i class="cb"></i><i class="sg"></i><span class="c" style="left:90.9px">10023-1148-01</span><span class="c" style="left:146.8px">Halit Pade</span><span class="c" style="left:221.9px">01.02.2011</span><span class="c r" style="right:622.4px">596,24</span><span class="c r" style="right:561.2px">624,15</span><span class="c r" style="right:537.9px">0,96</span><span class="c r" style="right:495.7px">0,00</span><span class="c r" style="right:462.8px">0,00</span><span class="c r" style="right:430.1px">0,00</span><span class="c r" style="right:397.3px">0,00</span><span class="c" style="left:606.2px">01.01.2017</span><span class="c r" style="right:139.2px">0,00</span><span class="c r" style="right:101.8px">0</span><span class="c r" style="right:64.2px">0</span><span class="c r" style="right:26.8px">0</span></div>
<div id="vsb" class="abs"></div><div id="vsbt" class="abs"></div>
<div id="hsb" class="abs"></div>
<div id="psb" class="abs"></div>
<div id="foot" class="abs"></div>
<div id="save" class="abs">Sichern</div>
<div id="canc" class="abs">Abbrechen</div>
</div></div>
</body></html>
